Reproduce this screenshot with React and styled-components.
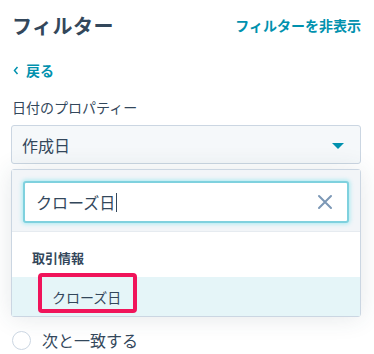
import styled, { createGlobalStyle } from 'styled-components';

const GlobalStyle = createGlobalStyle`
  html, body {
    margin: 0;
    padding: 0;
    background: #ffffff;
  }
  body {
    font-family: "Lato", "Noto Sans CJK JP", sans-serif;
    color: #33475b;
    overflow: hidden;
  }
`;

const Page = styled.div`
  width: 374px;
  height: 354px;
  box-sizing: border-box;
  padding: 11px 13px 0 11px;
  overflow: hidden;
`;

const Header = styled.div`
  display: flex;
  justify-content: space-between;
  align-items: center;
  height: 28px;
  padding-left: 1px;
`;

const Title = styled.h1`
  margin: 0;
  font-size: 20px;
  font-weight: 700;
  color: #33475b;
  letter-spacing: 0.5px;
`;

const LinkText = styled.a`
  font-size: 14px;
  font-weight: 700;
  color: #0091ae;
  text-decoration: none;
  display: inline-flex;
  align-items: center;
  gap: 7px;
`;

const BackRow = styled.div`
  margin-top: 21px;
  padding-left: 2px;
  height: 20px;
  display: flex;
  align-items: center;
`;

const Label = styled.div`
  margin-top: 18px;
  font-size: 14px;
  color: #33475b;
  padding-left: 1px;
  height: 20px;
  line-height: 20px;
`;

const Select = styled.div`
  margin-top: 7px;
  height: 39px;
  box-sizing: border-box;
  border: 1px solid #cbd6e2;
  border-radius: 3px;
  background: #f5f8fa;
  display: flex;
  align-items: center;
  justify-content: space-between;
  padding: 0 16px 0 10px;
  font-size: 16px;
  color: #33475b;
`;

const Caret = styled.span`
  width: 0;
  height: 0;
  border-left: 6px solid transparent;
  border-right: 6px solid transparent;
  border-top: 6px solid #0091ae;
  margin-top: 2px;
`;

const Panel = styled.div`
  margin-top: 5px;
  border: 1px solid #cbd6e2;
  border-radius: 3px;
  background: #ffffff;
  box-shadow: 0 1px 24px 0 rgba(45, 62, 80, 0.12);
`;

const SearchArea = styled.div`
  background: #f2f5f8;
  padding: 11px 11px 8px 11px;
  border-bottom: 1px solid #e6ebf0;
`;

const SearchBox = styled.div`
  height: 42px;
  box-sizing: border-box;
  border: 2px solid #7fd1de;
  border-radius: 3px;
  background: #ffffff;
  box-shadow: 0 0 4px 1px rgba(0, 208, 228, 0.3);
  display: flex;
  align-items: center;
  padding: 0 14px 0 11px;
  font-size: 16px;
  color: #33475b;
`;

const Cursor = styled.span`
  display: inline-block;
  width: 1px;
  height: 19px;
  background: #33475b;
  margin-left: 1px;
`;

const SearchText = styled.span`
  flex: 1;
  display: flex;
  align-items: center;
`;

const GroupLabel = styled.div`
  font-size: 13px;
  font-weight: 700;
  color: #33475b;
  padding: 16px 20px 0 20px;
  height: 45px;
  box-sizing: border-box;
`;

const Option = styled.div`
  position: relative;
  height: 39px;
  display: flex;
  align-items: center;
  padding-left: 40px;
  background: ${p => (p.$active ? '#e5f5f8' : '#ffffff')};
  font-size: 14px;
  color: #33475b;
`;

const Highlight = styled.span`
  position: absolute;
  left: 26px;
  top: -4px;
  width: 99px;
  height: 40px;
  box-sizing: border-box;
  border: 4px solid #f0145a;
  border-radius: 4px;
`;

const RadioRow = styled.div`
  margin-top: 11px;
  display: flex;
  align-items: center;
  gap: 11px;
  padding-left: 1px;
  font-size: 16px;
  color: #33475b;
`;

const Radio = styled.span`
  width: 19px;
  height: 19px;
  box-sizing: border-box;
  border: 1px solid #cbd6e2;
  border-radius: 50%;
  background: #fff;
`;

const CloseIcon = () => (
  <svg width="16" height="16" viewBox="0 0 16 16">
    <path d="M2 2 L14 14 M14 2 L2 14" stroke="#7c98b6" strokeWidth="2" strokeLinecap="round" />
  </svg>
);

const ChevronLeft = () => (
  <svg width="6" height="9" viewBox="0 0 6 9">
    <path d="M4.5 1 L1.5 4.5 L4.5 8" stroke="#0091ae" strokeWidth="1.5" fill="none" />
  </svg>
);

export default function App() {
  return (
    <>
      <GlobalStyle />
      <Page>
        <Header>
          <Title>フィルター</Title>
          <LinkText>フィルターを非表示</LinkText>
        </Header>
        <BackRow>
          <LinkText><ChevronLeft />戻る</LinkText>
        </BackRow>
        <Label>日付のプロパティー</Label>
        <Select>
          <span>作成日</span>
          <Caret />
        </Select>
        <Panel>
          <SearchArea>
            <SearchBox>
              <SearchText>クローズ日<Cursor /></SearchText>
              <CloseIcon />
            </SearchBox>
          </SearchArea>
          <GroupLabel>取引情報</GroupLabel>
          <Option $active>
            クローズ日
            <Highlight />
          </Option>
        </Panel>
        <RadioRow>
          <Radio />
          <span>次と一致する</span>
        </RadioRow>
      </Page>
    </>
  );
}
